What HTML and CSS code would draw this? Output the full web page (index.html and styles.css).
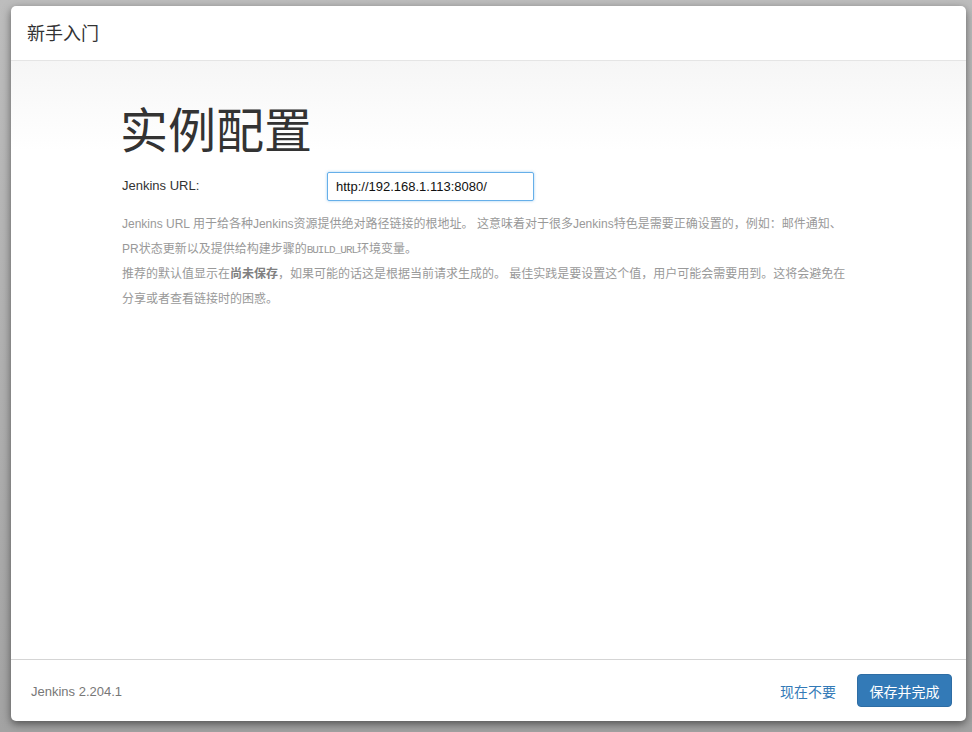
FILE: index.html
```html
<!DOCTYPE html>
<html lang="zh-CN">
<head>
<meta charset="utf-8">
<title>Jenkins</title>
<link rel="stylesheet" href="styles.css">
</head>
<body>
<div class="dialog">
  <div class="dlg-header">
    <h4 class="dlg-title">新手入门</h4>
  </div>
  <div class="dlg-body">
    <div class="panel">
      <h1 class="page-title">实例配置</h1>
      <div class="form-row">
        <label class="form-label" for="url">Jenkins URL:</label>
        <input id="url" class="form-input" type="text" value="http://192.168.1.113:8080/">
      </div>
      <div class="help">
        <p>Jenkins URL 用于给各种Jenkins资源提供绝对路径链接的根地址。 这意味着对于很多Jenkins特色是需要正确设置的，例如：邮件通知、PR状态更新以及提供给构建步骤的<code>BUILD_URL</code>环境变量。</p>
        <p>推荐的默认值显示在<strong>尚未保存</strong>，如果可能的话这是根据当前请求生成的。 最佳实践是要设置这个值，用户可能会需要用到。这将会避免在分享或者查看链接时的困惑。</p>
      </div>
    </div>
  </div>
  <div class="dlg-footer">
    <div class="version">Jenkins 2.204.1</div>
    <div class="actions">
      <a class="link-skip" href="#">现在不要</a>
      <button class="btn-primary" type="button">保存并完成</button>
    </div>
  </div>
</div>
</body>
</html>
```

FILE: styles.css
```css
html, body {
  margin: 0;
  padding: 0;
}
body {
  width: 972px;
  height: 732px;
  box-sizing: border-box;
  padding: 6px 6px 0 11px;
  background: linear-gradient(#bdbdbd, #a3a3a3);
  font-family: "Liberation Sans", Arial, "Noto Sans CJK SC", sans-serif;
  color: #333;
  overflow: hidden;
}
.dialog {
  width: 955px;
  height: 715px;
  background: #fff;
  border-radius: 5px;
  box-shadow: 0 3px 9px rgba(0,0,0,.5);
  display: flex;
  flex-direction: column;
  overflow: hidden;
}
.dlg-header {
  height: 54px;
  border-bottom: 1px solid #e5e5e5;
  display: flex;
  align-items: center;
  padding: 0 16px;
  flex: none;
}
.dlg-title {
  margin: 0;
  font-size: 18px;
  font-weight: normal;
  color: #333;
  line-height: 1;
  padding-top: 2px;
}
.dlg-body {
  flex: 1;
  background: linear-gradient(#f6f6f6 0, #ffffff 90px);
}
.panel {
  padding: 40px 0 0 109px;
}
.page-title {
  margin: 0;
  font-size: 48px;
  font-weight: normal;
  line-height: 62px;
  color: #333;
}
.form-row {
  display: flex;
  align-items: flex-start;
  margin-top: 9px;
}
.form-label {
  width: 205px;
  font-size: 13px;
  padding: 6px 0 0 2px;
  color: #333;
}
.form-input {
  width: 207px;
  height: 29px;
  box-sizing: border-box;
  border: 1px solid #66afe9;
  box-shadow: 0 0 3px rgba(102,175,233,.6);
  border-radius: 2px;
  padding: 0 8px;
  font-family: "Liberation Sans", Arial, sans-serif;
  font-size: 13px;
  color: #111;
  outline: none;
}
.help {
  margin: 11px 0 0 2px;
  width: 735px;
  font-size: 12px;
  line-height: 25px;
  color: #999;
}
.help p {
  margin: 0;
}
.help code {
  font-family: "Liberation Mono", "DejaVu Sans Mono", monospace;
  font-size: 11px;
  line-height: 1;
  letter-spacing: -1px;
}
.help strong {
  color: #808080;
  line-height: 1;
}
.dlg-footer {
  flex: none;
  height: 61px;
  border-top: 1px solid #d5d5d5;
  display: flex;
  align-items: center;
  justify-content: space-between;
  padding: 0 14px 0 20px;
}
.version {
  font-size: 13px;
  color: #777;
  padding-top: 2px;
}
.actions {
  display: flex;
  align-items: center;
  gap: 21px;
}
.link-skip {
  font-size: 14px;
  color: #337ab7;
  text-decoration: none;
}
.btn-primary {
  width: 95px;
  height: 33px;
  border: 1px solid #2e6da4;
  border-radius: 4px;
  background: #337ab7;
  color: #fff;
  font-family: "Liberation Sans", Arial, "Noto Sans CJK SC", sans-serif;
  font-size: 14px;
  padding: 0;
}
```
